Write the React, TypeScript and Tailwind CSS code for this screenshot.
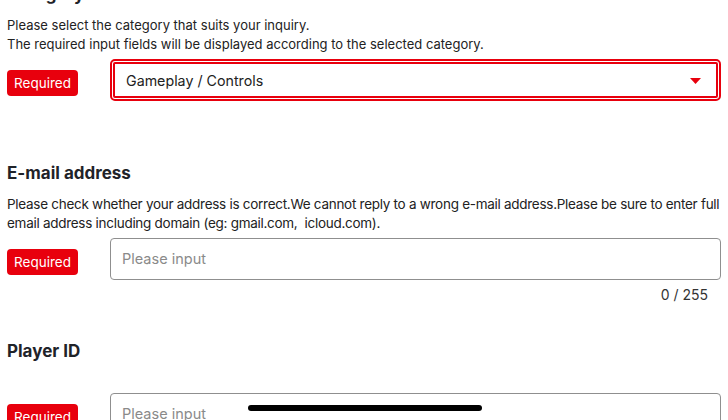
import React from "react";

function Badge() {
  return (
    <div className="mt-[11px] flex h-[26px] w-[71px] shrink-0 items-center justify-center rounded-[4px] bg-[#e8000d] text-[13.5px] text-white">
      Required
    </div>
  );
}

export default function App() {
  return (
    <div
      className="relative h-[420px] w-[728px] overflow-hidden bg-white text-[#222]"
      style={{ fontFamily: 'Inter, "Noto Sans", sans-serif' }}
    >
      <div className="mt-[-18px] px-[7px]">
        {/* Category */}
        <h2 className="text-[17px] font-bold leading-[24px] text-[#1f2329]">Category</h2>
        <p className="mt-[10px] text-[13px] leading-[19px]">
          Please select the category that suits your inquiry.
          <br />
          The required input fields will be displayed according to the selected category.
        </p>
        <div className="mt-[5px] flex items-start">
          <Badge />
          <div className="ml-[32px] flex-1 rounded-[5px] border-2 border-[#e8000d] p-[1px]">
            <div className="flex h-[36px] items-center justify-between rounded-[2px] border-2 border-[#e8000d] pl-[11px] pr-[15px] pt-[2px]">
              <span className="text-[14.25px]">Gameplay / Controls</span>
              <svg width="11" height="6" viewBox="0 0 11 6">
                <path d="M0 0 L11 0 L5.5 6 Z" fill="#e8000d" />
              </svg>
            </div>
          </div>
        </div>

        {/* Email */}
        <h2 className="mt-[60px] text-[17px] font-bold leading-[24px] text-[#1f2329]">E-mail address</h2>
        <p className="mt-[10px] text-[13.5px] leading-[19px] tracking-[-0.28px]">
          Please check whether your address is correct.We cannot reply to a wrong e-mail address.Please be sure to enter full email address including domain (eg: gmail.com,&nbsp; icloud.com).
        </p>
        <div className="mt-[5px] flex items-start">
          <Badge />
          <div className="ml-[32px] flex h-[42px] flex-1 items-center rounded-[4px] border border-[#8f8f8f] px-[11px]">
            <span className="text-[14.5px] text-[#8a8a8a]">Please input</span>
          </div>
        </div>
        <div className="mt-[5px] pr-[13px] text-right text-[14px] leading-[19px] text-[#333]">0 / 255</div>

        {/* Player ID */}
        <h2 className="mt-[35px] text-[17px] font-bold leading-[24px] text-[#1f2329]">Player ID</h2>
        <div className="mt-[30px] flex items-start">
          <Badge />
          <div className="ml-[32px] flex h-[42px] flex-1 items-center rounded-[4px] border border-[#8f8f8f] px-[11px]">
            <span className="text-[14.5px] text-[#8a8a8a]">Please input</span>
          </div>
        </div>
      </div>

      {/* iOS home indicator */}
      <div className="absolute left-[248px] top-[405px] h-[6px] w-[234px] rounded-full bg-black" />
    </div>
  );
}
